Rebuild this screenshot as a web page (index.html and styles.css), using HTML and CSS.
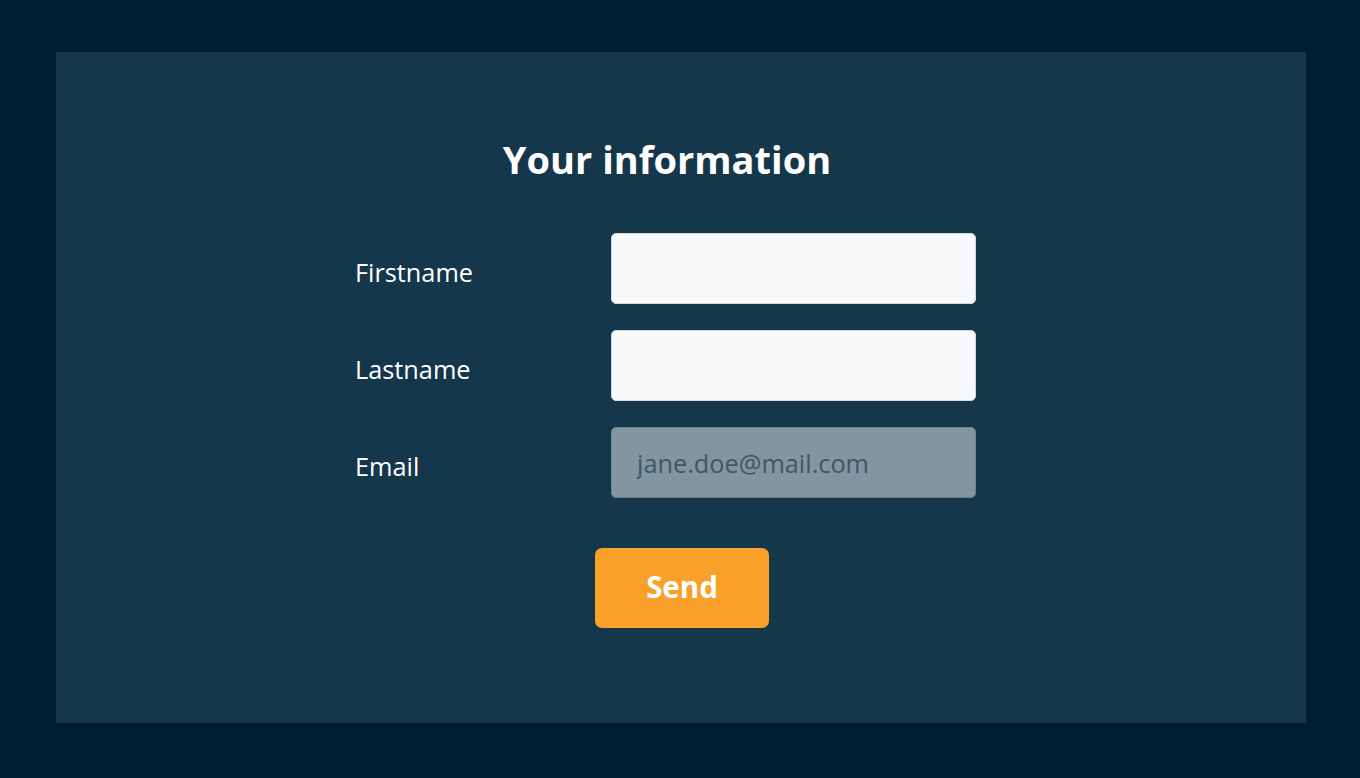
FILE: index.html
```html
<!DOCTYPE html>
<html>
<head>
<meta charset="utf-8">
<link rel="stylesheet" href="styles.css">
</head>
<body>
<div class="panel">
  <form class="form">
    <h1 class="title">Your information</h1>
    <div class="row">
      <label class="label">Firstname</label>
      <input class="field" type="text">
    </div>
    <div class="row">
      <label class="label">Lastname</label>
      <input class="field" type="text">
    </div>
    <div class="row">
      <label class="label">Email</label>
      <input class="field field-disabled" type="text" placeholder="jane.doe@mail.com" disabled>
    </div>
  </form>
  <div class="actions">
    <button class="send" type="button">Send</button>
  </div>
</div>
</body>
</html>
```

FILE: styles.css
```css
html, body {
  margin: 0;
  padding: 0;
}
body {
  background: #001e32;
  font-family: "Open Sans", "Liberation Sans", sans-serif;
  width: 1360px;
  height: 778px;
  padding: 52px 54px 0 56px;
  box-sizing: border-box;
}
.panel {
  background: #15374b;
  width: 1250px;
  height: 671px;
  box-sizing: border-box;
  padding-top: 83px;
}
.form {
  width: 621px;
  margin: 0 0 0 299px;
  display: flex;
  flex-direction: column;
  gap: 26px;
}
.title {
  margin: 0 0 24px;
  font-size: 38px;
  line-height: 48px;
  font-weight: 700;
  color: #ffffff;
  text-align: center;
  padding-left: 3px;
}
.row {
  display: grid;
  grid-template-columns: 256px 365px;
  align-items: center;
}
.label {
  color: #ffffff;
  font-size: 25.3px;
  line-height: 32px;
  padding-top: 6px;
}
.field {
  width: 365px;
  height: 71px;
  box-sizing: border-box;
  background: #f8f9fb;
  border: 1px solid #d3d9df;
  border-radius: 5px;
  font-family: "Open Sans", "Liberation Sans", sans-serif;
  font-size: 25.3px;
  padding: 0 0 0 25px;
  margin: 0;
  outline: none;
}
.field-disabled {
  background: #83969f;
  border-color: #6f838d;
}
.field-disabled::placeholder {
  color: #3f5664;
  opacity: 1;
}
.actions {
  display: flex;
  justify-content: center;
  margin-top: 50px;
}
.send {
  width: 174px;
  height: 80px;
  background: #f9a12a;
  border: none;
  border-radius: 7px;
  color: #ffffff;
  font-family: "Open Sans", "Liberation Sans", sans-serif;
  font-weight: 700;
  font-size: 29.5px;
  padding: 0 0 3px;
  margin-left: 2px;
}
```
